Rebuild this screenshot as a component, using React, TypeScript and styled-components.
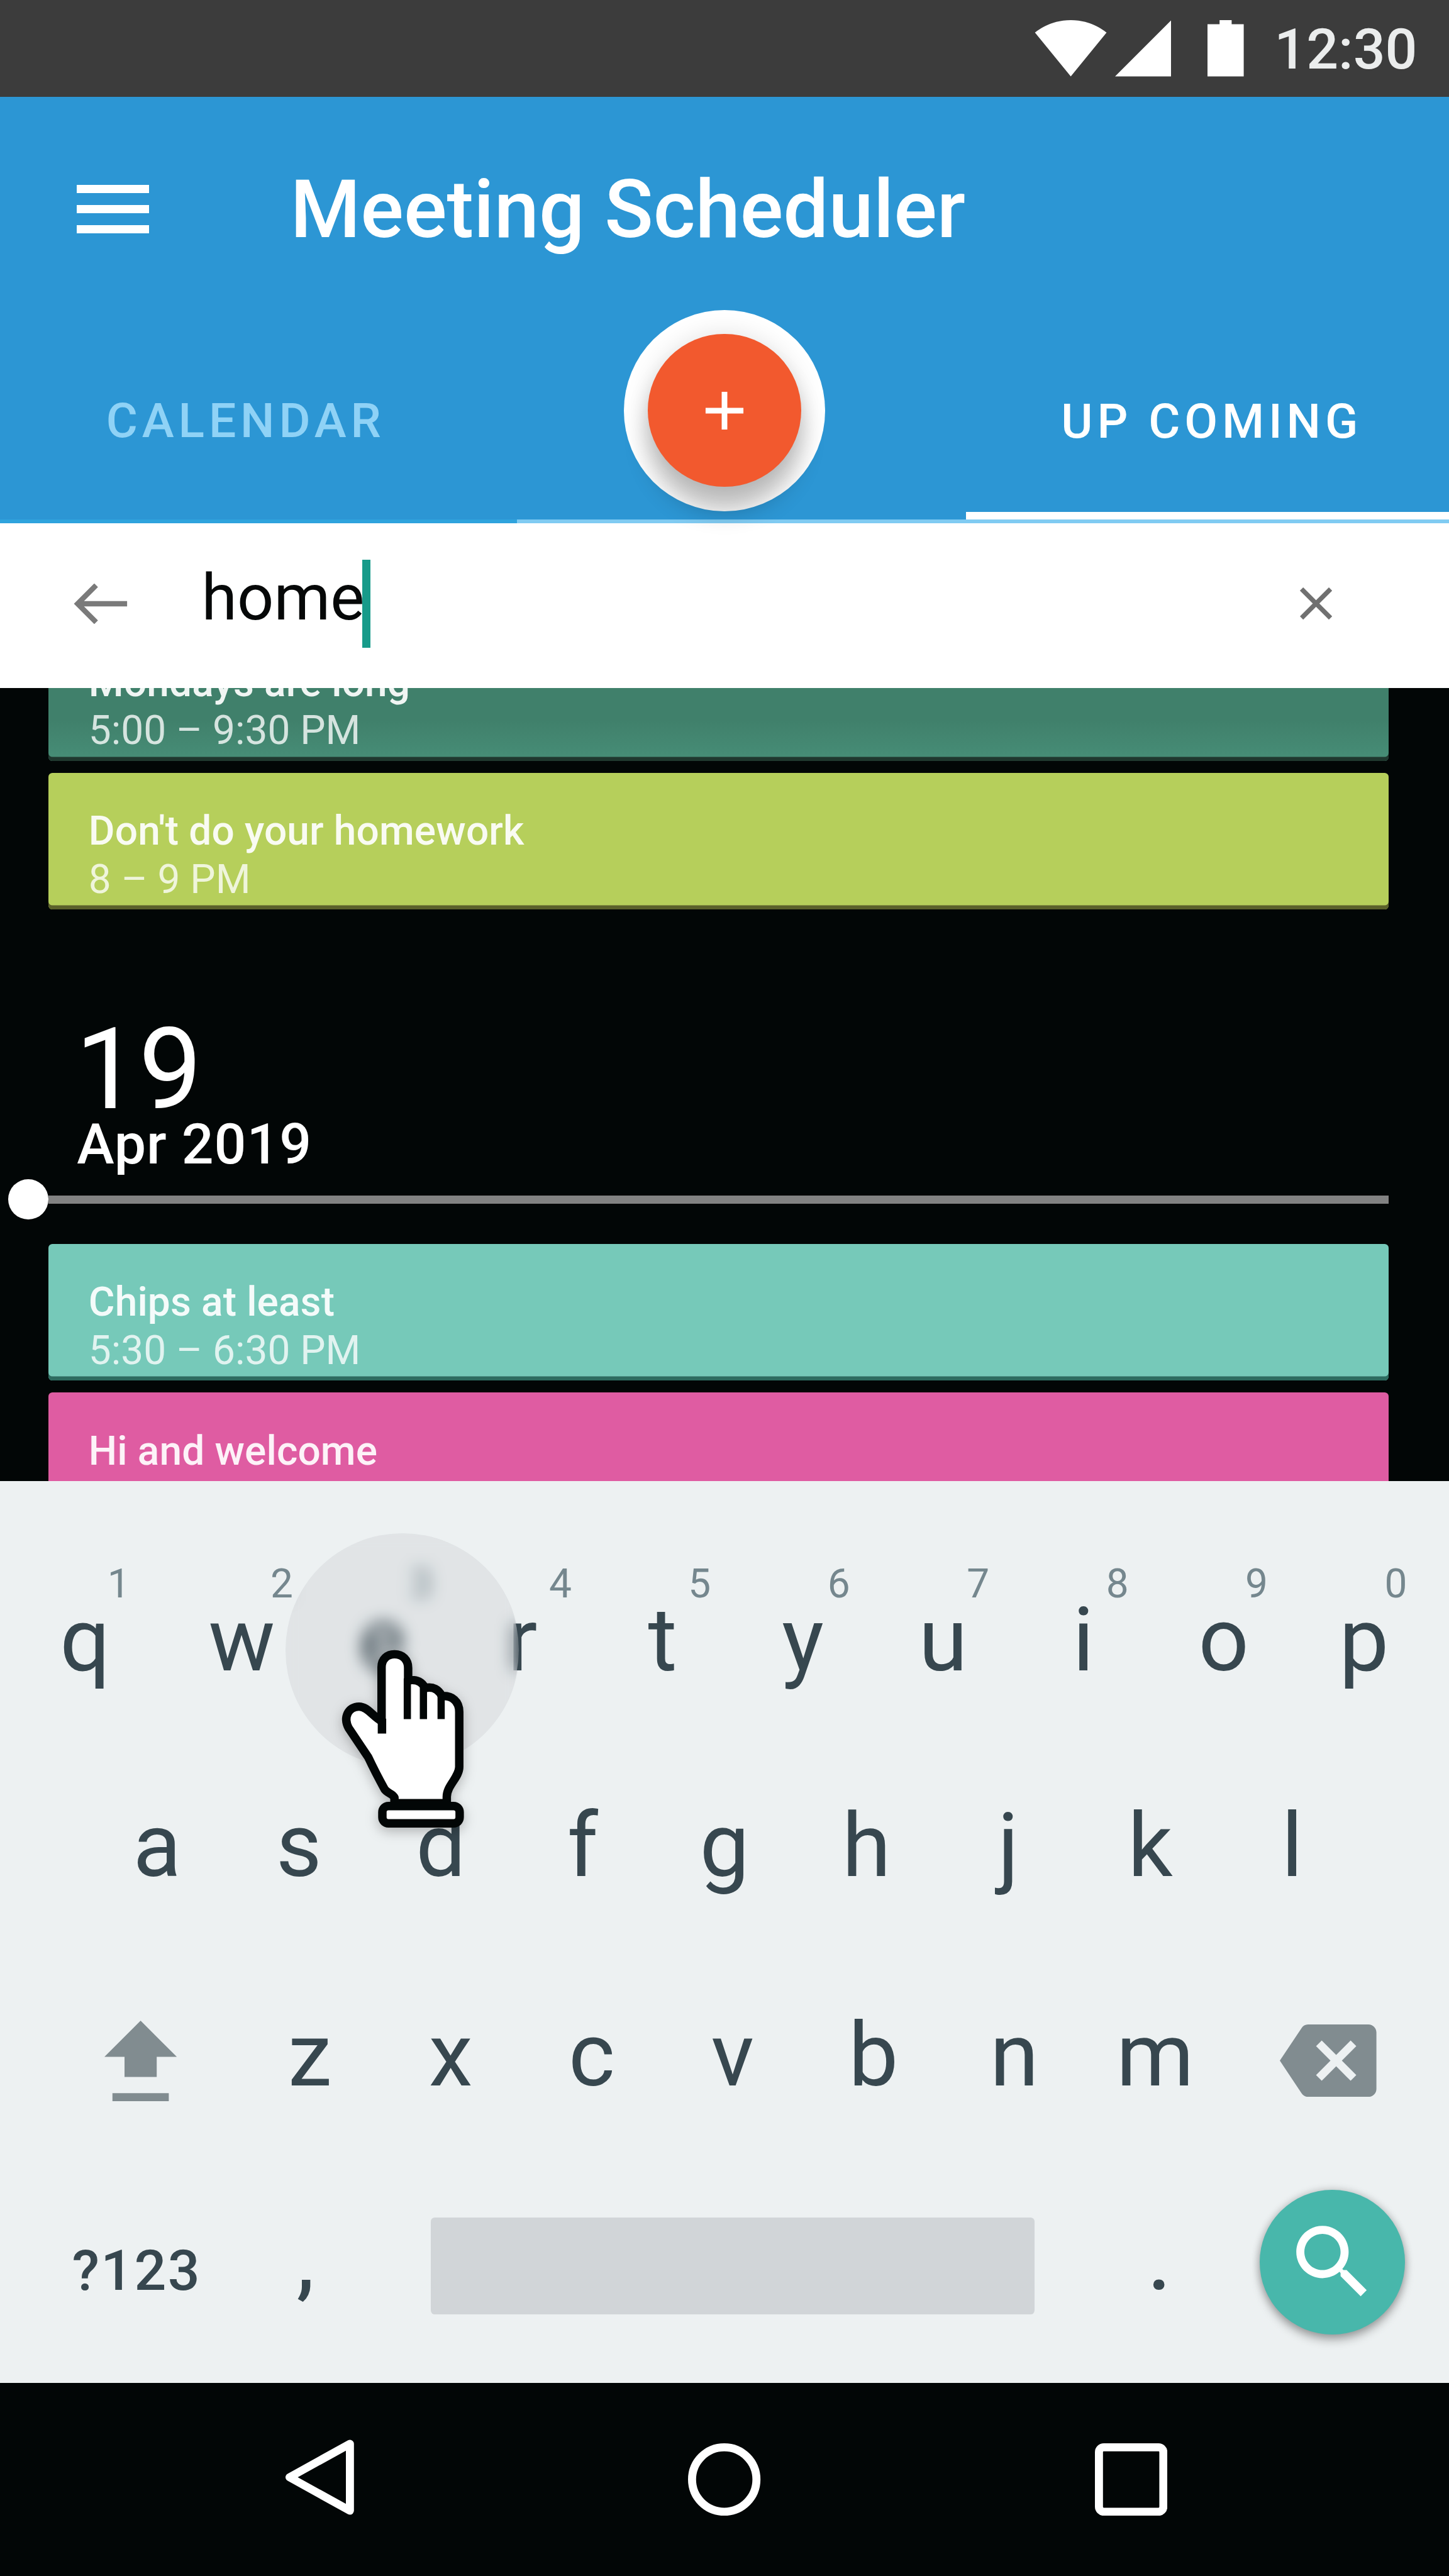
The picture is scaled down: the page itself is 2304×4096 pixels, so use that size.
import React from "react";
import styled, { createGlobalStyle } from "styled-components";

/* 1rem is one unit of the 360 x 640 phone screen. */
const GlobalStyle = createGlobalStyle`
  html { font-size: 6.4px; }
  body { margin: 0; background: #020606; }
  *, *::before, *::after { box-sizing: border-box; }
`;

const Screen = styled.div`
  position: relative;
  display: flex;
  flex-direction: column;
  width: 360rem;
  height: 640rem;
  overflow: hidden;
  background: #020606;
  font-family: Roboto, "Noto Sans", sans-serif;
`;

const Icon = styled.svg<{ $w: number; $h: number }>`
  display: block;
  flex: none;
  width: ${(p) => p.$w}rem;
  height: ${(p) => p.$h}rem;
`;

const StatusBar = styled.div`
  display: flex;
  align-items: center;
  height: 24rem;
  padding-left: 257rem;
  background: #3c3c3c;
`;

const StatusIcons = styled.div`
  display: flex;
  align-items: center;
  width: 59.6rem;
`;

const SignalSlot = styled.div`
  margin: 0 9rem 0 2rem;
`;

const Clock = styled.div`
  padding-top: 0.4rem;
  color: #ebeded;
  font-size: 14rem;
  font-weight: 500;
  line-height: 23.6rem;
`;

const Header = styled.header`
  display: flex;
  flex-direction: column;
  height: 106rem;
  background: #2c96d4;
`;

const Toolbar = styled.div`
  display: flex;
  align-items: center;
  height: 56rem;
  padding-left: 19rem;
`;

const MenuButton = styled.div`
  display: flex;
  flex-direction: column;
  gap: 3rem;
  width: 18rem;
  margin-right: 35.1rem;
`;

const MenuBar = styled.div`
  height: 2rem;
  background: #fff;
`;

const Title = styled.h1`
  margin: 0;
  padding-top: 0.4rem;
  color: #fff;
  font-size: 20rem;
  font-weight: 500;
  line-height: 28rem;
  white-space: nowrap;
`;

const Tabs = styled.div`
  position: relative;
  display: grid;
  grid-template-columns: 120rem 120rem 120rem;
  height: 49rem;
`;

const Tab = styled.div<{ $active?: boolean }>`
  display: flex;
  align-items: center;
  justify-content: center;
  padding-left: 2.1rem;
  padding-top: ${(p) => (p.$active ? "2.2rem" : "0.2rem")};
  border-bottom: ${(p) => (p.$active ? "2rem solid #fff" : "none")};
  color: ${(p) => (p.$active ? "#fff" : "#8fd2f6")};
  font-size: 12rem;
  font-weight: 500;
  letter-spacing: 1.07rem;
  white-space: nowrap;
`;

const HeaderRule = styled.div`
  height: 1rem;
  background: linear-gradient(to right, #2fa3dd 128.5rem, #80cbf2 128.5rem);
`;

const FabRing = styled.div`
  position: absolute;
  z-index: 2;
  left: 155rem;
  top: -3rem;
  display: flex;
  align-items: center;
  justify-content: center;
  width: 50rem;
  height: 50rem;
  border-radius: 50%;
  background: #fff;
`;

const Fab = styled.div`
  display: flex;
  align-items: center;
  justify-content: center;
  width: 38rem;
  height: 38rem;
  border-radius: 50%;
  background: #f2592e;
  box-shadow: 0 6rem 6rem rgba(0, 0, 0, 0.24), 0 0 6rem rgba(0, 0, 0, 0.12);
`;

const SearchBar = styled.div`
  display: flex;
  align-items: center;
  height: 41rem;
  padding: 0 29rem 1rem 18.3rem;
  background: #fff;
`;

const SearchField = styled.div`
  display: flex;
  flex: 1;
  height: 22rem;
  margin-left: 17.8rem;
  color: #060808;
  font-size: 16rem;
  line-height: 19rem;
`;

const Caret = styled.span`
  width: 2rem;
  height: 22rem;
  margin-left: -0.5rem;
  background: #179b8a;
`;

const Agenda = styled.main`
  display: flex;
  flex-direction: column;
  height: 197rem;
  overflow: hidden;
`;

const EventCard = styled.article<{ $fill: string; $edge: string; $clipped?: boolean }>`
  flex: none;
  width: 333rem;
  height: 34rem;
  margin: ${(p) => (p.$clipped ? "-16rem" : "0")} 0 3rem 12rem;
  padding: 8.7rem 0 0 10rem;
  border-radius: 1rem;
  background: ${(p) => p.$fill};
  box-shadow: inset 0 -1rem 0 ${(p) => p.$edge};
  color: #fff;
  font-size: 10rem;
  line-height: 12rem;
`;

const EventTitle = styled.div`
  color: rgba(255, 255, 255, 0.92);
  font-weight: 500;
  letter-spacing: 0.02rem;
`;

const EventTime = styled.div`
  color: rgba(255, 255, 255, 0.78);
`;

const DayHeader = styled.div`
  flex: none;
  height: 80rem;
  padding-top: 24.9rem;
  color: #fff;
`;

const DayNumber = styled.div`
  padding-left: 18.7rem;
  font-size: 28rem;
  line-height: 24rem;
`;

const DayMonth = styled.div`
  margin-top: -0.6rem;
  padding-left: 19.1rem;
  font-size: 14rem;
  font-weight: 500;
  line-height: 14rem;
  letter-spacing: 0.14rem;
`;

const Timeline = styled.div`
  display: flex;
  align-items: center;
  margin-top: 1.7rem;
  padding-left: 2rem;
`;

const TimelineDot = styled.div`
  width: 10rem;
  height: 10rem;
  border-radius: 50%;
  background: #fff;
`;

const TimelineRule = styled.div`
  width: 333rem;
  height: 2rem;
  background: #828282;
`;

const Keyboard = styled.section`
  position: relative;
  display: flex;
  flex-direction: column;
  height: 224rem;
  padding-top: 19.6rem;
  background: #edf1f2;
  color: #37474f;
`;

const HintRow = styled.div`
  display: flex;
  height: 12rem;
  padding-left: 12.2rem;
  color: #75878e;
  font-size: 10rem;
  line-height: 12rem;
  text-align: center;
`;

const Hint = styled.span<{ $first?: boolean }>`
  flex: none;
  width: 34.6rem;
  margin-right: ${(p) => (p.$first ? "5.9rem" : "0")};
`;

const KeyRow = styled.div<{ $height: number; $left: number }>`
  display: flex;
  align-items: center;
  height: ${(p) => p.$height}rem;
  padding-left: ${(p) => p.$left}rem;
`;

const TopKeys = styled(KeyRow)`
  margin-bottom: 17.6rem;
`;

const Key = styled.span<{ $w: number; $gap?: number }>`
  flex: none;
  width: ${(p) => p.$w}rem;
  margin-right: ${(p) => p.$gap ?? 0}rem;
  font-size: 22rem;
  line-height: 15.8rem;
  text-align: center;
`;

const IconKey = styled.div<{ $left: number }>`
  margin: 3rem 0 0 ${(p) => p.$left}rem;
`;

const SymbolKey = styled.span`
  width: 33rem;
  margin-top: 4.6rem;
  font-size: 14rem;
  font-weight: 500;
  line-height: 16rem;
  letter-spacing: 0.35rem;
  white-space: nowrap;
`;

const PunctuationKey = styled.span`
  width: 50rem;
  font-size: 20rem;
  font-weight: 500;
  line-height: 24rem;
  text-align: center;
`;

const SpaceKey = styled.div`
  width: 150rem;
  height: 24rem;
  margin: 2rem 6rem 0 6.1rem;
  border-radius: 1rem;
  background: #d1d5d8;
`;

const SearchKey = styled.div`
  display: flex;
  align-items: center;
  justify-content: center;
  width: 36rem;
  height: 36rem;
  border-radius: 50%;
  background: #48b7ab;
  box-shadow: 0 0 2rem rgba(0, 0, 0, 0.2), 0 1.4rem 2.4rem rgba(0, 0, 0, 0.28);
`;

const TouchRipple = styled.div`
  position: absolute;
  left: 71rem;
  top: 13rem;
  width: 58rem;
  height: 58rem;
  border-radius: 50%;
  background: rgba(20, 24, 28, 0.055);
  backdrop-filter: blur(2rem);
`;

const HandPointer = styled(Icon)`
  position: absolute;
  left: 80rem;
  top: 37rem;
  overflow: visible;
  filter: drop-shadow(0 1rem 1.5rem rgba(0, 0, 0, 0.26));
`;

const NavBar = styled.nav`
  display: flex;
  align-items: center;
  height: 48rem;
  padding-left: 71rem;
  background: #020606;
`;

const NavSlot = styled.div<{ $gap: number; $lift?: number }>`
  margin-right: ${(p) => p.$gap}rem;
  margin-bottom: ${(p) => p.$lift ?? 0}rem;
`;

const HINTS = ["1", "2", "3", "4", "5", "6", "7", "8", "9", "0"];
const ROW_ONE = "qwertyuiop".split("");
const ROW_TWO = "asdfghjkl".split("");
const ROW_THREE = "zxcvbnm".split("");

function Hand() {
  return (
    <HandPointer $w={40} $h={50} viewBox="0 0 40 50" fill="#fff" stroke="#020606" strokeWidth={2.1} strokeLinejoin="round">
      <path d="M18 43V41.6C17.6 40.6 16.3 40.6 15.6 39.6C14 36.7 12.9 34.6 11.5 31.6L6.6 24.3C5.2 21.6 6.6 19 9.2 19C11.3 19 12.6 21.4 14.8 22.6V9.2C14.8 7.2 16.2 6 18 6C20 6 21.4 7.3 21.4 9.4V12.5C23.6 12.1 25 13 25.6 14.4C27.6 13.9 29 14.8 29.8 16.4C32.3 16.2 34.1 17.7 34.1 20.3V34C34.1 36.6 31 38.6 31 41.4V43Z" />
      <path d="M14.9 22V25.7" />
      <path d="M21.2 12V22.1M25.2 13.8V22.1" strokeWidth={1.8} />
      <path d="M29.6 16V22.1" strokeWidth={1.8} />
      <rect x={15} y={43.7} width={19.2} height={4.3} rx={1.5} />
    </HandPointer>
  );
}

export default function App() {
  return (
    <>
      <GlobalStyle />
      <Screen>
        <StatusBar>
          <StatusIcons>
            <Icon $w={18} $h={14} viewBox="0 0 18 14" fill="#fff">
              <path d="M9 14L.1 3.1C.5 2.8 3.7 0 9 0s8.5 2.8 8.9 3.1z" />
            </Icon>
            <SignalSlot>
              <Icon $w={14} $h={14} viewBox="0 0 14 14" fill="#fff">
                <path d="M0 14H14V0z" />
              </Icon>
            </SignalSlot>
            <Icon $w={9} $h={14} viewBox="0 0 9 14" fill="#fff">
              <path d="M3 0h3v1h3v13H0V1h3z" />
            </Icon>
          </StatusIcons>
          <Clock>12:30</Clock>
        </StatusBar>

        <Header>
          <Toolbar>
            <MenuButton>
              <MenuBar />
              <MenuBar />
              <MenuBar />
            </MenuButton>
            <Title>Meeting Scheduler</Title>
          </Toolbar>
          <Tabs>
            <Tab>CALENDAR</Tab>
            <div />
            <Tab $active>UP COMING</Tab>
            <FabRing>
              <Fab>
                <Icon $w={10} $h={10} viewBox="0 0 10 10" fill="none" stroke="#fff" strokeWidth={1.4}>
                  <path d="M5 .3V9.7M.3 5H9.7" />
                </Icon>
              </Fab>
            </FabRing>
          </Tabs>
          <HeaderRule />
        </Header>

        <SearchBar>
          <Icon $w={14} $h={10} viewBox="0 0 14 10" fill="none" stroke="#7a7a7a" strokeWidth={1.3}>
            <path d="M13.3 5H1.3M5.6 .4L1 5L5.6 9.6" />
          </Icon>
          <SearchField>
            home
            <Caret />
          </SearchField>
          <Icon $w={8} $h={8} viewBox="0 0 8 8" fill="none" stroke="#707070" strokeWidth={1.15}>
            <path d="M.4 .4L7.6 7.6M7.6 .4L.4 7.6" />
          </Icon>
        </SearchBar>

        <Agenda>
          <EventCard $clipped $fill="linear-gradient(#40806b 70%, #478e77)" $edge="#20382f">
            <EventTitle>Mondays are long</EventTitle>
            <EventTime>5:00 – 9:30 PM</EventTime>
          </EventCard>
          <EventCard $fill="#b6cf5b" $edge="#5b612b">
            <EventTitle>Don't do your homework</EventTitle>
            <EventTime>8 – 9 PM</EventTime>
          </EventCard>
          <DayHeader>
            <DayNumber>19</DayNumber>
            <DayMonth>Apr 2019</DayMonth>
            <Timeline>
              <TimelineDot />
              <TimelineRule />
            </Timeline>
          </DayHeader>
          <EventCard $fill="#76c9b9" $edge="#2d6b60">
            <EventTitle>Chips at least</EventTitle>
            <EventTime>5:30 – 6:30 PM</EventTime>
          </EventCard>
          <EventCard $fill="#df5ca2" $edge="#6b2c4e">
            <EventTitle>Hi and welcome</EventTitle>
          </EventCard>
        </Agenda>

        <Keyboard>
          <HintRow>
            {HINTS.map((n, i) => (
              <Hint key={n} $first={i === 0}>
                {n}
              </Hint>
            ))}
          </HintRow>
          <TopKeys $height={15.8} $left={3.7}>
            {ROW_ONE.map((k, i) => (
              <Key key={k} $w={34.85} $gap={i === 0 ? 4.1 : 0}>
                {k}
              </Key>
            ))}
          </TopKeys>
          <KeyRow $height={51} $left={21.4}>
            {ROW_TWO.map((k) => (
              <Key key={k} $w={35.25}>
                {k}
              </Key>
            ))}
          </KeyRow>
          <KeyRow $height={53} $left={0}>
            <IconKey $left={26}>
              <Icon $w={18} $h={20} viewBox="0 0 18 20" fill="#818c90">
                <path d="M9 0L18 9H13V14H5V9H0zM2 18H16V20H2z" />
              </Icon>
            </IconKey>
            <Key $w={15.5} />
            {ROW_THREE.map((k) => (
              <Key key={k} $w={35}>
                {k}
              </Key>
            ))}
            <IconKey $left={13.5}>
              <Icon $w={24} $h={18} viewBox="0 3 24 18" fill="#818c90">
                <path d="M22 3H7c-.69 0-1.23.35-1.59.88L0 12l5.41 8.11c.36.53.9.89 1.59.89h15c1.1 0 2-.9 2-2V5c0-1.1-.9-2-2-2zm-3 12.59L17.59 17 14 13.41 10.41 17 9 15.59 12.59 12 9 8.41 10.41 7 14 10.59 17.59 7 19 8.41 15.41 12 19 15.59z" />
              </Icon>
            </IconKey>
          </KeyRow>
          <KeyRow $height={50} $left={17.9}>
            <SymbolKey>?123</SymbolKey>
            <PunctuationKey>,</PunctuationKey>
            <SpaceKey />
            <PunctuationKey>.</PunctuationKey>
            <SearchKey>
              <Icon $w={24} $h={24} viewBox="0 0 24 24" fill="#fff">
                <path d="M15.5 14h-.79l-.28-.27C15.41 12.59 16 11.11 16 9.5 16 5.91 13.09 3 9.5 3S3 5.91 3 9.5 5.91 16 9.5 16c1.61 0 3.09-.59 4.23-1.57l.27.28v.79l5 4.99L20.49 19l-4.99-5zm-6 0C7.01 14 5 11.99 5 9.5S7.01 5 9.5 5 14 7.01 14 9.5 11.99 14 9.5 14z" />
              </Icon>
            </SearchKey>
          </KeyRow>
          <TouchRipple />
          <Hand />
        </Keyboard>

        <NavBar>
          <NavSlot $gap={83} $lift={1}>
            <Icon $w={17} $h={20} viewBox="0 0 17 20" fill="none" stroke="#fff" strokeWidth={2} strokeLinejoin="round">
              <path d="M16 1.7V18.3L1 10z" />
            </Icon>
          </NavSlot>
          <NavSlot $gap={83}>
            <Icon $w={18} $h={18} viewBox="0 0 18 18" fill="none" stroke="#fff" strokeWidth={2}>
              <circle cx={9} cy={9} r={8} />
            </Icon>
          </NavSlot>
          <Icon $w={18} $h={18} viewBox="0 0 18 18" fill="none" stroke="#fff" strokeWidth={2}>
            <rect x={1} y={1} width={16} height={16} rx={1.2} />
          </Icon>
        </NavBar>
      </Screen>
    </>
  );
}
